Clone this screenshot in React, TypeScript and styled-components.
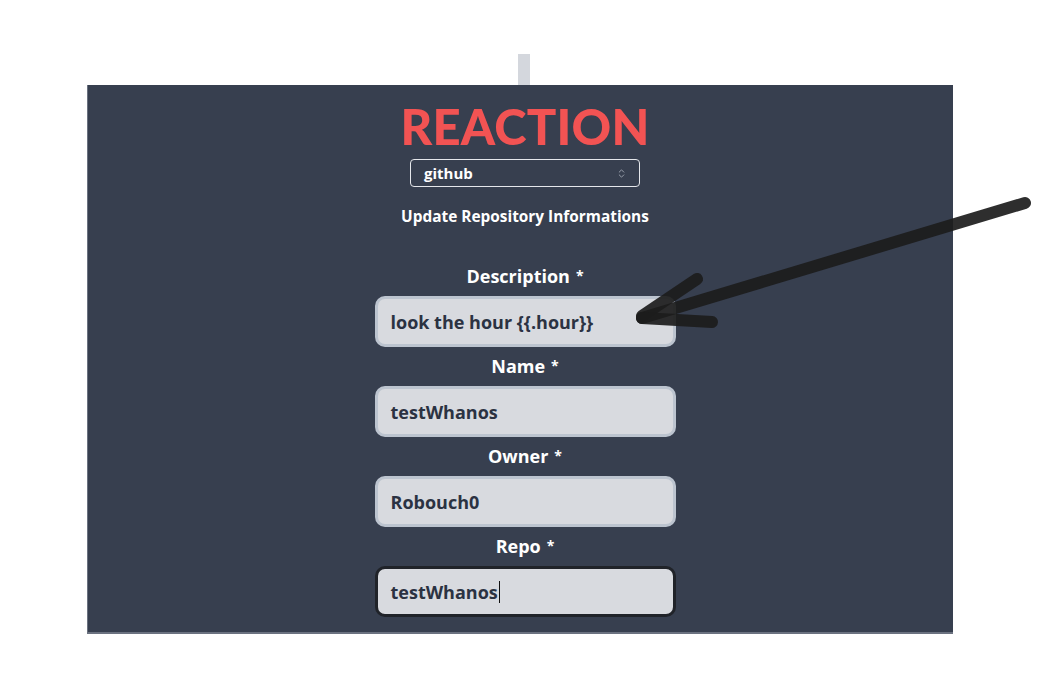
import React from "react";
import styled, { createGlobalStyle } from "styled-components";
import { ChevronsUpDown } from "lucide-react";

const GlobalStyle = createGlobalStyle`
  body {
    margin: 0;
    background: #ffffff;
    font-family: "Open Sans", "Noto Sans", sans-serif;
  }
`;

const Page = styled.div`
  position: relative;
  width: 1058px;
  height: 673px;
  padding-top: 54px;
  box-sizing: border-box;
  overflow: hidden;
`;

const Stub = styled.div`
  width: 12px;
  height: 31px;
  margin-left: 518px;
  background: #d4d7dd;
`;

const Panel = styled.div`
  width: 866px;
  height: 549px;
  margin-left: 87px;
  box-sizing: border-box;
  padding-left: 9px;
  background: #373f4f;
  border-left: 1px solid #6b7280;
  border-bottom: 2px solid #6b7280;
  display: flex;
  flex-direction: column;
  align-items: center;
`;

const Title = styled.h1`
  margin: 11px 0 0;
  font-family: Lato, "Open Sans", sans-serif;
  font-size: 49px;
  line-height: 60px;
  font-weight: 900;
  color: #f25353;
  letter-spacing: 0.2px;
`;

const Select = styled.div`
  margin-top: 3px;
  width: 230px;
  height: 28px;
  box-sizing: border-box;
  border: 1.5px solid #e5e7eb;
  border-radius: 4px;
  display: flex;
  align-items: center;
  justify-content: space-between;
  padding: 0 12px 0 13px;
  color: #ffffff;
  font-size: 15px;
  font-weight: 700;
  svg {
    color: #a0a6b1;
  }
`;

const Subtitle = styled.div`
  margin-top: 20px;
  font-size: 15.4px;
  line-height: 20px;
  font-weight: 700;
  color: #ffffff;
`;

const Form = styled.div`
  margin-top: 30px;
  display: flex;
  flex-direction: column;
  align-items: center;
`;

const Label = styled.div`
  margin: 7px 0 8px;
  height: 24px;
  font-size: 18px;
  line-height: 24px;
  font-weight: 700;
  color: #ffffff;
  span {
    position: relative;
    top: -2px;
    font-size: 14px;
    line-height: 1;
    margin-left: 6px;
  }
`;

const Field = styled.div<{ $focused?: boolean }>`
  width: 301px;
  height: 51px;
  flex-shrink: 0;
  box-sizing: border-box;
  border: 3px solid ${(p) => (p.$focused ? "#202329" : "#bcc4cf")};
  border-radius: 10px;
  background: #d8dadf;
  display: flex;
  align-items: center;
  padding-left: 13px;
  font-size: 18px;
  font-weight: 700;
  color: #2b3242;
`;

const Caret = styled.i`
  display: inline-block;
  width: 1px;
  height: 22px;
  margin-left: 1px;
  background: #111;
`;

const Overlay = styled.svg`
  position: absolute;
  left: 0;
  top: 0;
  pointer-events: none;
`;

const fields = [
  { label: "Description", value: "look the hour {{.hour}}" },
  { label: "Name", value: "testWhanos" },
  { label: "Owner", value: "Robouch0" },
  { label: "Repo", value: "testWhanos", focused: true },
];

export default function App() {
  return (
    <Page>
      <GlobalStyle />
      <Stub />
      <Panel>
        <Title>REACTION</Title>
        <Select>
          github
          <ChevronsUpDown size={11} strokeWidth={2} />
        </Select>
        <Subtitle>Update Repository Informations</Subtitle>
        <Form>
          {fields.map((f) => (
            <React.Fragment key={f.label}>
              <Label>
                {f.label}
                <span>*</span>
              </Label>
              <Field $focused={f.focused}>
                {f.value}
                {f.focused && <Caret />}
              </Field>
            </React.Fragment>
          ))}
        </Form>
      </Panel>
      <Overlay width="1058" height="673" viewBox="0 0 1058 673">
        <g
          stroke="rgba(28,28,28,0.92)"
          strokeWidth="12"
          strokeLinecap="round"
          fill="none"
        >
          <line x1="1025" y1="203" x2="642" y2="318" />
          <line x1="697" y1="279" x2="642" y2="316" />
          <line x1="642" y1="318" x2="712" y2="322" />
        </g>
      </Overlay>
    </Page>
  );
}
